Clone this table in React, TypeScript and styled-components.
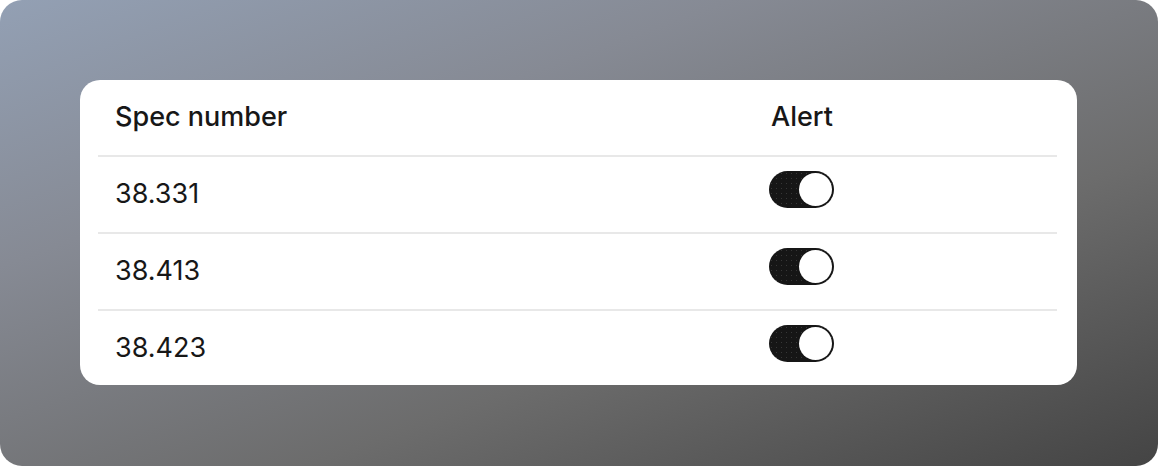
import React, { useState } from 'react';
import styled, { createGlobalStyle } from 'styled-components';

const GlobalStyle = createGlobalStyle`
  html, body {
    margin: 0;
    padding: 0;
    background: #ffffff;
  }
`;

const specs = [
  { id: '38.331', alert: true },
  { id: '38.413', alert: true },
  { id: '38.423', alert: true },
];

function Toggle({ on, onToggle }: { on: boolean; onToggle: () => void }) {
  return (
    <Switch type="button" $on={on} onClick={onToggle} aria-pressed={on}>
      <Knob $on={on} />
    </Switch>
  );
}

export default function App() {
  const [rows, setRows] = useState(specs);

  const toggle = (id: string) =>
    setRows((prev) => prev.map((r) => (r.id === id ? { ...r, alert: !r.alert } : r)));

  return (
    <>
      <GlobalStyle />
      <Frame>
        <Card>
          <Table>
            <thead>
              <tr>
                <HeadCell>Spec number</HeadCell>
                <HeadCell>Alert</HeadCell>
              </tr>
            </thead>
            <tbody>
              {rows.map((row) => (
                <Row key={row.id}>
                  <Cell>{row.id}</Cell>
                  <Cell>
                    <Toggle on={row.alert} onToggle={() => toggle(row.id)} />
                  </Cell>
                </Row>
              ))}
            </tbody>
          </Table>
        </Card>
      </Frame>
    </>
  );
}

const Frame = styled.div`
  box-sizing: border-box;
  width: 1158px;
  height: 466px;
  padding: 80px 81px 80px 80px;
  border-radius: 22px;
  background: linear-gradient(160deg, #93a0b4 0%, #868a94 30%, #6c6c6c 65%, #444444 100%);
  font-family: Inter, 'Noto Sans', sans-serif;
`;

const Card = styled.div`
  box-sizing: border-box;
  height: 305px;
  padding: 0 20px 0 18px;
  border-radius: 20px;
  background: #ffffff;
`;

const Table = styled.table`
  width: 100%;
  border-collapse: collapse;
  table-layout: fixed;
  color: #171717;
  font-size: 27px;

  th:first-child,
  td:first-child {
    width: 622px;
  }
`;

const HeadCell = styled.th`
  height: 73px;
  padding: 0 17px 2px;
  text-align: left;
  font-weight: 500;
  border-bottom: 2px solid #e8e8e8;
`;

const Row = styled.tr`
  & + & > td {
    border-top: 2px solid #e8e8e8;
  }
`;

const Cell = styled.td`
  height: 72px;
  padding: 0 17px 3px;
  font-weight: 400;
  vertical-align: middle;
`;

const Switch = styled.button<{ $on: boolean }>`
  position: relative;
  display: block;
  width: 65px;
  height: 37px;
  margin: 0 0 7px -2px;
  padding: 0;
  border: none;
  border-radius: 19px;
  cursor: pointer;
  background-color: ${(p) => (p.$on ? '#161616' : '#d4d4d4')};
  background-image: radial-gradient(circle, rgba(255, 255, 255, 0.14) 0.6px, transparent 1px);
  background-size: 5px 5px;
`;

const Knob = styled.span<{ $on: boolean }>`
  position: absolute;
  top: 2px;
  left: ${(p) => (p.$on ? '30px' : '2px')};
  width: 33px;
  height: 33px;
  border-radius: 50%;
  background: #ffffff;
  box-sizing: border-box;
`;
